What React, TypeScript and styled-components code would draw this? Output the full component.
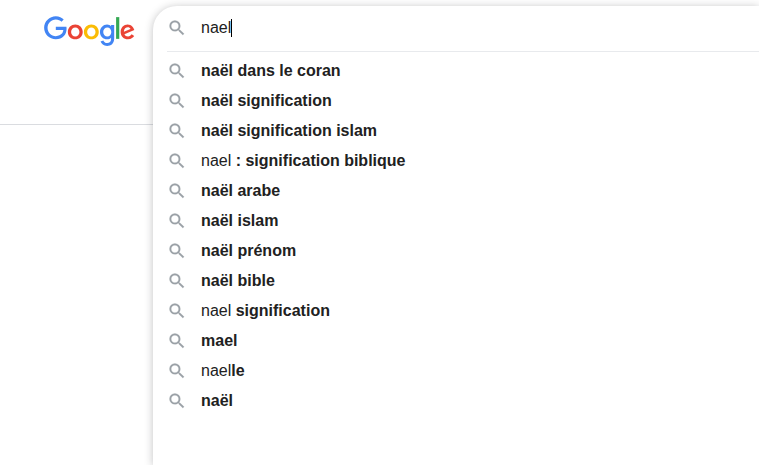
import React, { useState } from "react";
import styled, { createGlobalStyle } from "styled-components";

const GlobalStyle = createGlobalStyle`
  * { box-sizing: border-box; }
  body {
    margin: 0;
    background: #fff;
    color: #212121;
    font-family: "Liberation Sans", Arial, sans-serif;
    font-size: 16px;
  }
`;

const Page = styled.div`
  display: flex;
  min-height: 100vh;
  overflow: hidden;
`;

const Brand = styled.header`
  flex: none;
  align-self: flex-start;
  width: 153px;
  height: 125px;
  padding: 16px 0 0 44px;
  border-bottom: 1px solid #dadce0;
`;

const HomeLink = styled.a`
  display: block;
  width: 91px;
`;

const LogoSvg = styled.svg`
  display: block;
  width: 91px;
  height: 31px;
`;

const SearchPanel = styled.main`
  flex: 1;
  min-width: 0;
  margin-top: 6px;
  background: #fff;
  border-top-left-radius: 24px;
  box-shadow: 0 1px 8px rgba(32, 33, 36, 0.28);
`;

const SearchForm = styled.form`
  display: flex;
  align-items: center;
  height: 46px;
  margin-left: 14px;
  padding-bottom: 1px;
  border-bottom: 1px solid #e8eaed;
`;

const SearchIconSvg = styled.svg`
  flex: none;
  width: 20px;
  height: 20px;
  margin-right: 14px;
  fill: #9aa0a6;
  stroke: #9aa0a6;
  stroke-width: 0.3;
`;

const QueryInput = styled.input`
  field-sizing: content;
  height: 34px;
  padding: 0;
  border: 0;
  outline: 0;
  background: transparent;
  color: #212121;
  caret-color: transparent;
  font: inherit;
`;

const Caret = styled.span`
  width: 1px;
  height: 18px;
  background: #000;
`;

const Suggestions = styled.ul`
  margin: 0;
  padding: 4px 0 0;
  list-style: none;
`;

const SuggestionButton = styled.button`
  display: flex;
  align-items: center;
  width: 100%;
  height: 30px;
  padding: 0 0 0 14px;
  border: 0;
  background: transparent;
  color: inherit;
  font: inherit;
  text-align: left;
  white-space: pre;
  cursor: pointer;

  &:hover { background: #eee; }
`;

const SearchIcon = () => (
  <SearchIconSvg viewBox="0 0 24 24" aria-hidden="true">
    <path d="M15.5 14h-.79l-.28-.27A6.471 6.471 0 0 0 16 9.5 6.5 6.5 0 1 0 9.5 16c1.61 0 3.09-.59 4.23-1.57l.27.28v.79l5 4.99L20.49 19l-4.99-5zm-6 0C7.01 14 5 11.99 5 9.5S7.01 5 9.5 5 14 7.01 14 9.5 11.99 14 9.5 14z" />
  </SearchIconSvg>
);

const Logo = () => (
  <LogoSvg viewBox="0 0 272 92" role="img" aria-label="Google">
    <path fill="#EA4335" d="M115.75 47.18c0 12.77-9.99 22.18-22.25 22.18s-22.25-9.41-22.25-22.18C71.25 34.32 81.24 25 93.5 25s22.25 9.32 22.25 22.18zm-9.74 0c0-7.98-5.79-13.44-12.51-13.44S80.99 39.2 80.99 47.18c0 7.9 5.79 13.44 12.51 13.44s12.51-5.55 12.51-13.44z" />
    <path fill="#FBBC05" d="M163.75 47.18c0 12.77-9.99 22.18-22.25 22.18s-22.25-9.41-22.25-22.18c0-12.85 9.99-22.18 22.25-22.18s22.25 9.32 22.25 22.18zm-9.74 0c0-7.98-5.79-13.44-12.51-13.44s-12.51 5.46-12.51 13.44c0 7.9 5.79 13.44 12.51 13.44s12.51-5.55 12.51-13.44z" />
    <path fill="#4285F4" d="M209.75 26.34v39.82c0 16.38-9.66 23.07-21.08 23.07-10.75 0-17.22-7.19-19.66-13.07l8.48-3.53c1.51 3.61 5.21 7.87 11.17 7.87 7.31 0 11.84-4.51 11.84-13v-3.19h-.34c-2.18 2.69-6.38 5.04-11.68 5.04-11.09 0-21.25-9.66-21.25-22.09 0-12.52 10.16-22.26 21.25-22.26 5.29 0 9.49 2.35 11.68 4.96h.34v-3.61h9.25zm-8.56 20.92c0-7.81-5.21-13.52-11.84-13.52-6.72 0-12.35 5.71-12.35 13.52 0 7.73 5.63 13.36 12.35 13.36 6.63 0 11.84-5.63 11.84-13.36z" />
    <path fill="#34A853" d="M225 3v65h-9.5V3h9.5z" />
    <path fill="#EA4335" d="M262.02 54.48l7.56 5.04c-2.44 3.61-8.32 9.83-18.48 9.83-12.6 0-22.01-9.74-22.01-22.18 0-13.19 9.49-22.18 20.92-22.18 11.51 0 17.14 9.16 18.98 14.11l1.01 2.52-29.65 12.28c2.27 4.45 5.8 6.72 10.75 6.72 4.96 0 8.4-2.44 10.92-6.14zm-23.27-7.98l19.82-8.23c-1.09-2.77-4.37-4.7-8.23-4.7-4.95 0-11.84 4.37-11.59 12.93z" />
    <path fill="#4285F4" d="M35.29 41.41V32H67c.31 1.64.47 3.58.47 5.68 0 7.06-1.93 15.79-8.15 22.01-6.05 6.3-13.78 9.66-24.02 9.66C16.32 69.35.36 53.89.36 34.91.36 15.93 16.32.47 35.3.47c10.5 0 17.98 4.12 23.6 9.49l-6.64 6.64c-4.03-3.78-9.49-6.72-16.97-6.72-13.86 0-24.7 11.17-24.7 25.03 0 13.86 10.84 25.03 24.7 25.03 8.99 0 14.11-3.61 17.39-6.89 2.66-2.66 4.41-6.46 5.1-11.65l-22.49.01z" />
  </LogoSvg>
);

interface Suggestion {
  typed?: string;
  completion: string;
}

const suggestions: Suggestion[] = [
  { completion: "naël dans le coran" },
  { completion: "naël signification" },
  { completion: "naël signification islam" },
  { typed: "nael", completion: " : signification biblique" },
  { completion: "naël arabe" },
  { completion: "naël islam" },
  { completion: "naël prénom" },
  { completion: "naël bible" },
  { typed: "nael", completion: " signification" },
  { completion: "mael" },
  { typed: "nael", completion: "le" },
  { completion: "naël" },
];

export default function App() {
  const [query, setQuery] = useState("nael");

  return (
    <>
      <GlobalStyle />
      <Page>
        <Brand>
          <HomeLink href="#">
            <Logo />
          </HomeLink>
        </Brand>
        <SearchPanel>
          <SearchForm role="search" onSubmit={(e) => e.preventDefault()}>
            <SearchIcon />
            <QueryInput
              aria-label="Rechercher"
              autoComplete="off"
              spellCheck={false}
              value={query}
              onChange={(e) => setQuery(e.target.value)}
            />
            <Caret />
          </SearchForm>
          <Suggestions>
            {suggestions.map(({ typed = "", completion }) => (
              <li key={typed + completion}>
                <SuggestionButton type="button" onClick={() => setQuery(typed + completion)}>
                  <SearchIcon />
                  <span>
                    {typed}
                    <b>{completion}</b>
                  </span>
                </SuggestionButton>
              </li>
            ))}
          </Suggestions>
        </SearchPanel>
      </Page>
    </>
  );
}
